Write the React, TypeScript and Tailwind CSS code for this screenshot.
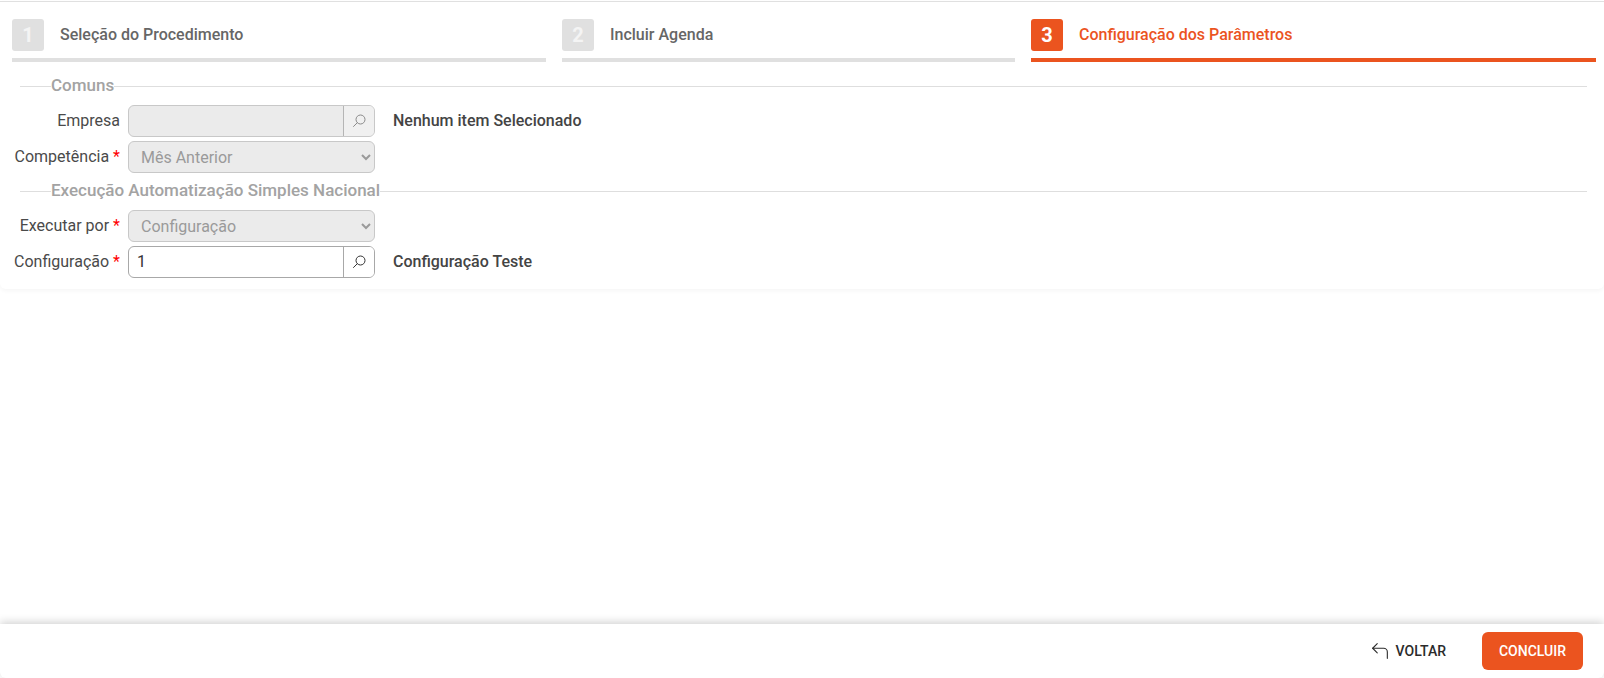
import { CornerUpLeft } from "lucide-react";
import React from "react";

const steps = [
  { num: 1, title: "Seleção do Procedimento", width: "w-[534px]" },
  { num: 2, title: "Incluir Agenda", width: "w-[453px]" },
  { num: 3, title: "Configuração dos Parâmetros", width: "w-[565px]", active: true },
];

const Legend = ({ title }: { title: string }) => (
  <div className="flex items-center h-[20px] ml-[20px] mr-[17px]">
    <div className="w-[31px] h-px bg-[#dedede]" />
    <span className="text-[17px] font-medium text-[#a3a3a3] leading-none pb-[2px]">{title}</span>
    <div className="flex-1 h-px bg-[#dedede]" />
  </div>
);

const Label = ({ text, required }: { text: string; required?: boolean }) => (
  <div className="w-[120px] mr-[8px] text-right text-[16px] text-[#4a4a4a] whitespace-nowrap">
    {text}
    {required && <span className="text-[#f00] ml-[4px]">*</span>}
  </div>
);

const Lookup = ({ value, disabled }: { value?: string; disabled?: boolean }) => (
  <div
    className={`flex w-[247px] h-[32px] rounded-[6px] border overflow-hidden ${
      disabled ? "bg-[#ebebeb] border-[#c8c8c8]" : "bg-white border-[#a8a8a8]"
    }`}
  >
    <input
      readOnly
      value={value ?? ""}
      className="flex-1 min-w-0 px-[8px] text-[16px] text-[#333] bg-transparent outline-none"
    />
    <div
      className={`w-[31px] flex items-center justify-center border-l ${
        disabled ? "bg-[#f0f0f0] border-[#b5b5b5]" : "bg-white border-[#a8a8a8]"
      }`}
    >
      <svg
        width="14"
        height="14"
        viewBox="0 0 14 14"
        fill="none"
        stroke="currentColor"
        strokeWidth="1"
        className={disabled ? "text-[#8a8a8a]" : "text-[#333]"}
      >
        <circle cx="8.5" cy="5.5" r="4.5" />
        <path d="M5.3 8.7 1.5 12.5" strokeLinecap="round" />
      </svg>
    </div>
  </div>
);

const DisabledSelect = ({ value }: { value: string }) => (
  <select
    disabled
    value={value}
    onChange={() => {}}
    className="w-[247px] h-[32px] rounded-[6px] border border-[#c8c8c8] bg-[#ebebeb] pl-[8px] text-[16px] text-[#9a9a9a] outline-none"
  >
    <option>{value}</option>
  </select>
);

const Note = ({ text }: { text: string }) => (
  <span className="ml-[18px] text-[16px] font-medium text-[#444]">{text}</span>
);

const App = () => {
  return (
    <div className="flex flex-col h-[678px] bg-white overflow-hidden font-['Roboto',sans-serif]">
      <div className="border-t border-[#e0e0e0] mt-px pb-[11px] rounded-b-[6px] shadow-[0_2px_4px_rgba(0,0,0,0.04)]">
        <div className="flex gap-[16px] pl-[12px] pt-[17px] mb-[14px]">
          {steps.map((step) => (
            <div key={step.num} className={`${step.width} shrink-0`}>
              <div className="flex items-center h-[32px] mb-[7px]">
                <div
                  className={`w-[32px] h-[32px] rounded-[3px] flex items-center justify-center text-[20px] font-bold ${
                    step.active ? "bg-[#eb541f] text-white" : "bg-[#e0e0e0] text-[#f4f4f4]"
                  }`}
                >
                  {step.num}
                </div>
                <span
                  className={`ml-[16px] text-[16px] font-medium ${
                    step.active ? "text-[#eb541f]" : "text-[#666]"
                  }`}
                >
                  {step.title}
                </span>
              </div>
              <div className={`h-[4px] ${step.active ? "bg-[#eb541f]" : "bg-[#e0e0e0]"}`} />
            </div>
          ))}
        </div>

        <Legend title="Comuns" />
        <div className="flex flex-col gap-[4px] mt-[9px]">
          <div className="flex items-center">
            <Label text="Empresa" />
            <Lookup disabled />
            <Note text="Nenhum item Selecionado" />
          </div>
          <div className="flex items-center">
            <Label text="Competência" required />
            <DisabledSelect value="Mês Anterior" />
          </div>
        </div>

        <div className="mt-[8px]">
          <Legend title="Execução Automatização Simples Nacional" />
        </div>
        <div className="flex flex-col gap-[4px] mt-[9px]">
          <div className="flex items-center">
            <Label text="Executar por" required />
            <DisabledSelect value="Configuração" />
          </div>
          <div className="flex items-center">
            <Label text="Configuração" required />
            <Lookup value="1" />
            <Note text="Configuração Teste" />
          </div>
        </div>
      </div>

      <div className="flex-1" />

      <div className="h-[54px] flex items-center justify-end pr-[21px] bg-white rounded-b-[6px] shadow-[0_-2px_8px_rgba(0,0,0,0.18)]">
        <button className="flex items-center gap-[5px] text-[14px] font-medium text-[#2b2b2b] mr-[36px]">
          <CornerUpLeft size={22} strokeWidth={1.2} />
          VOLTAR
        </button>
        <button className="w-[101px] h-[38px] rounded-[6px] bg-[#eb541f] text-white text-[14px] font-medium">
          CONCLUIR
        </button>
      </div>
    </div>
  );
};

export default App;
